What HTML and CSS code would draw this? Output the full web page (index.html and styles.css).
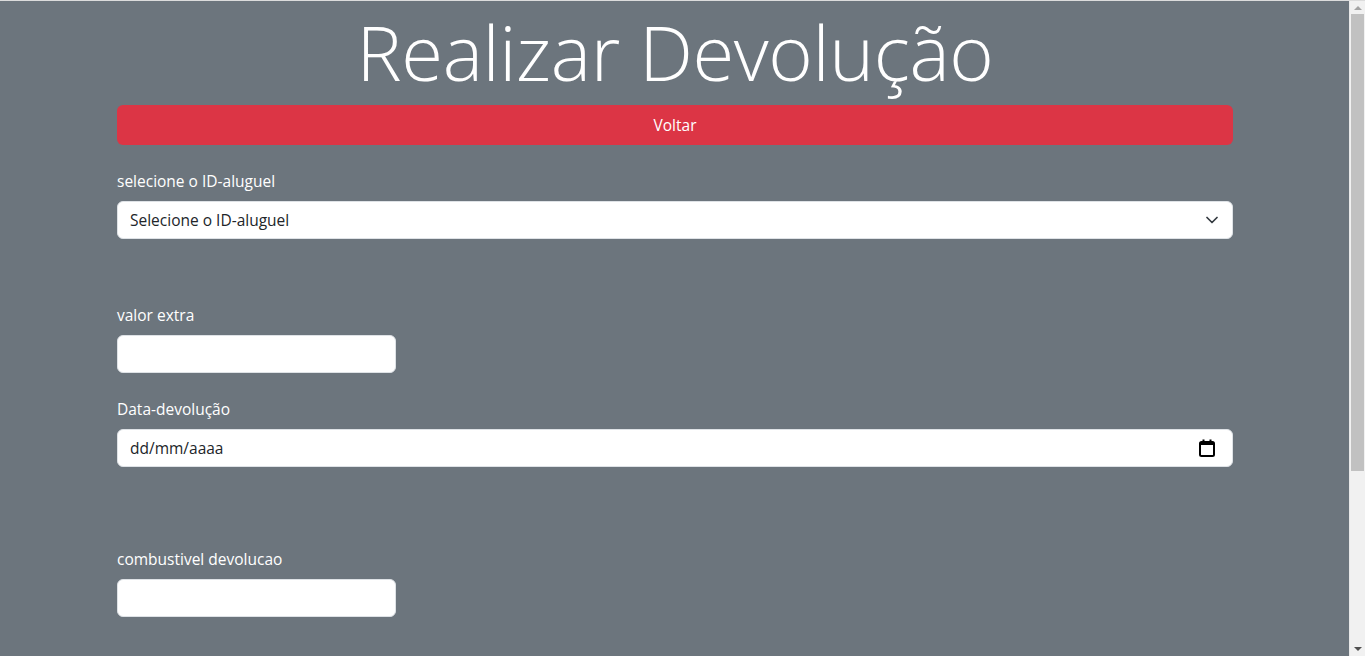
FILE: index.html
```html
<!DOCTYPE html>
<html lang="pt-BR">
<head>
<meta charset="utf-8">
<title>Realizar Devolução</title>
<link rel="stylesheet" href="styles.css">
</head>
<body>
<div class="page">
  <main class="container">
    <h1 class="title">Realizar Devolução</h1>
    <a class="btn-back" href="#">Voltar</a>
    <form class="form">
      <div class="field field-select">
        <label class="label" for="aluguel">selecione o ID-aluguel</label>
        <div class="select-wrap">
          <select id="aluguel" class="control select">
            <option>Selecione o ID-aluguel</option>
          </select>
          <svg class="chevron" viewBox="0 0 12 8" width="12" height="8" aria-hidden="true"><path d="M1 1.5l5 5 5-5" fill="none" stroke="#343a40" stroke-width="1.7" stroke-linecap="round" stroke-linejoin="round"/></svg>
        </div>
      </div>
      <div class="field field-extra">
        <label class="label" for="extra">valor extra</label>
        <input id="extra" class="control short" type="text">
      </div>
      <div class="field field-date">
        <label class="label">Data-devolução</label>
        <div class="control date">
          <span>dd/mm/aaaa</span>
          <svg class="cal" viewBox="0 0 16 18" width="16" height="18" aria-hidden="true"><rect x="1" y="3" width="14" height="14" rx="1.5" fill="none" stroke="#000" stroke-width="2"/><rect x="1" y="3" width="14" height="3" fill="#000"/><rect x="3.5" y="0.5" width="2" height="4" fill="#000"/><rect x="10.5" y="0.5" width="2" height="4" fill="#000"/></svg>
        </div>
      </div>
      <div class="field field-fuel">
        <label class="label" for="fuel">combustivel devolucao</label>
        <input id="fuel" class="control short" type="text">
      </div>
    </form>
  </main>
</div>
<div class="scrollbar" aria-hidden="true">
  <span class="arrow arrow-up"></span>
  <span class="thumb"></span>
  <span class="arrow arrow-down"></span>
</div>
</body>
</html>
```

FILE: styles.css
```css
html, body {
  margin: 0;
  padding: 0;
}
body {
  background: #6c757d;
  border-top: 1px solid #dcdcdc;
  font-family: "Open Sans", "Noto Sans", sans-serif;
  font-size: 15.5px;
  color: #fff;
}
.page {
  margin-right: 15px;
  min-height: 900px;
}
.container {
  max-width: 1116px;
  margin: 0 auto;
  padding: 0 12px;
  box-sizing: content-box;
}
.title {
  margin: 0 0 8px;
  text-align: center;
  font-weight: 300;
  font-size: 76px;
  line-height: 96px;
  letter-spacing: -0.4px;
  color: #fff;
  position: relative;
  top: 3px;
}
.btn-back {
  display: block;
  height: 40px;
  line-height: 40px;
  background: #dc3545;
  color: #fff;
  text-align: center;
  text-decoration: none;
  border-radius: 6px;
}
.form {
  display: flex;
  flex-direction: column;
  padding-bottom: 240px;
}
.field {
  display: flex;
  flex-direction: column;
}
.field-select { margin-top: 24px; }
.field-extra { margin-top: 64px; }
.field-date { margin-top: 24px; }
.field-fuel { margin-top: 80px; }
.label {
  line-height: 24px;
  margin-bottom: 8px;
}
.control {
  box-sizing: border-box;
  height: 38px;
  border: 1px solid #dee2e6;
  border-radius: 6px;
  background: #fff;
  color: #212529;
  font-family: inherit;
  font-size: 15.5px;
  padding: 0 12px;
  margin: 0;
  outline: none;
}
.short { width: 279px; }
.select-wrap {
  position: relative;
}
.select {
  width: 100%;
  -webkit-appearance: none;
  appearance: none;
}
.chevron {
  position: absolute;
  right: 15px;
  top: 15px;
  pointer-events: none;
}
.date {
  display: flex;
  align-items: center;
  justify-content: space-between;
  padding-right: 17px;
}
.cal { display: block; }

.scrollbar {
  position: fixed;
  top: 1px;
  right: 0;
  bottom: 0;
  width: 15px;
  background: #f1f1f1;
  border-left: 1px solid #e8e8e8;
  display: flex;
  flex-direction: column;
  align-items: center;
}
.thumb {
  width: 13px;
  height: 457px;
  background: #c1c1c1;
  margin-top: 0;
}
.arrow {
  width: 0;
  height: 0;
  border-left: 4px solid transparent;
  border-right: 4px solid transparent;
}
.arrow-up {
  border-bottom: 4px solid #a3a3a3;
  margin: 5px 0 4px;
}
.arrow-down {
  border-top: 4px solid #505050;
  margin-top: auto;
  margin-bottom: 5px;
}
```
